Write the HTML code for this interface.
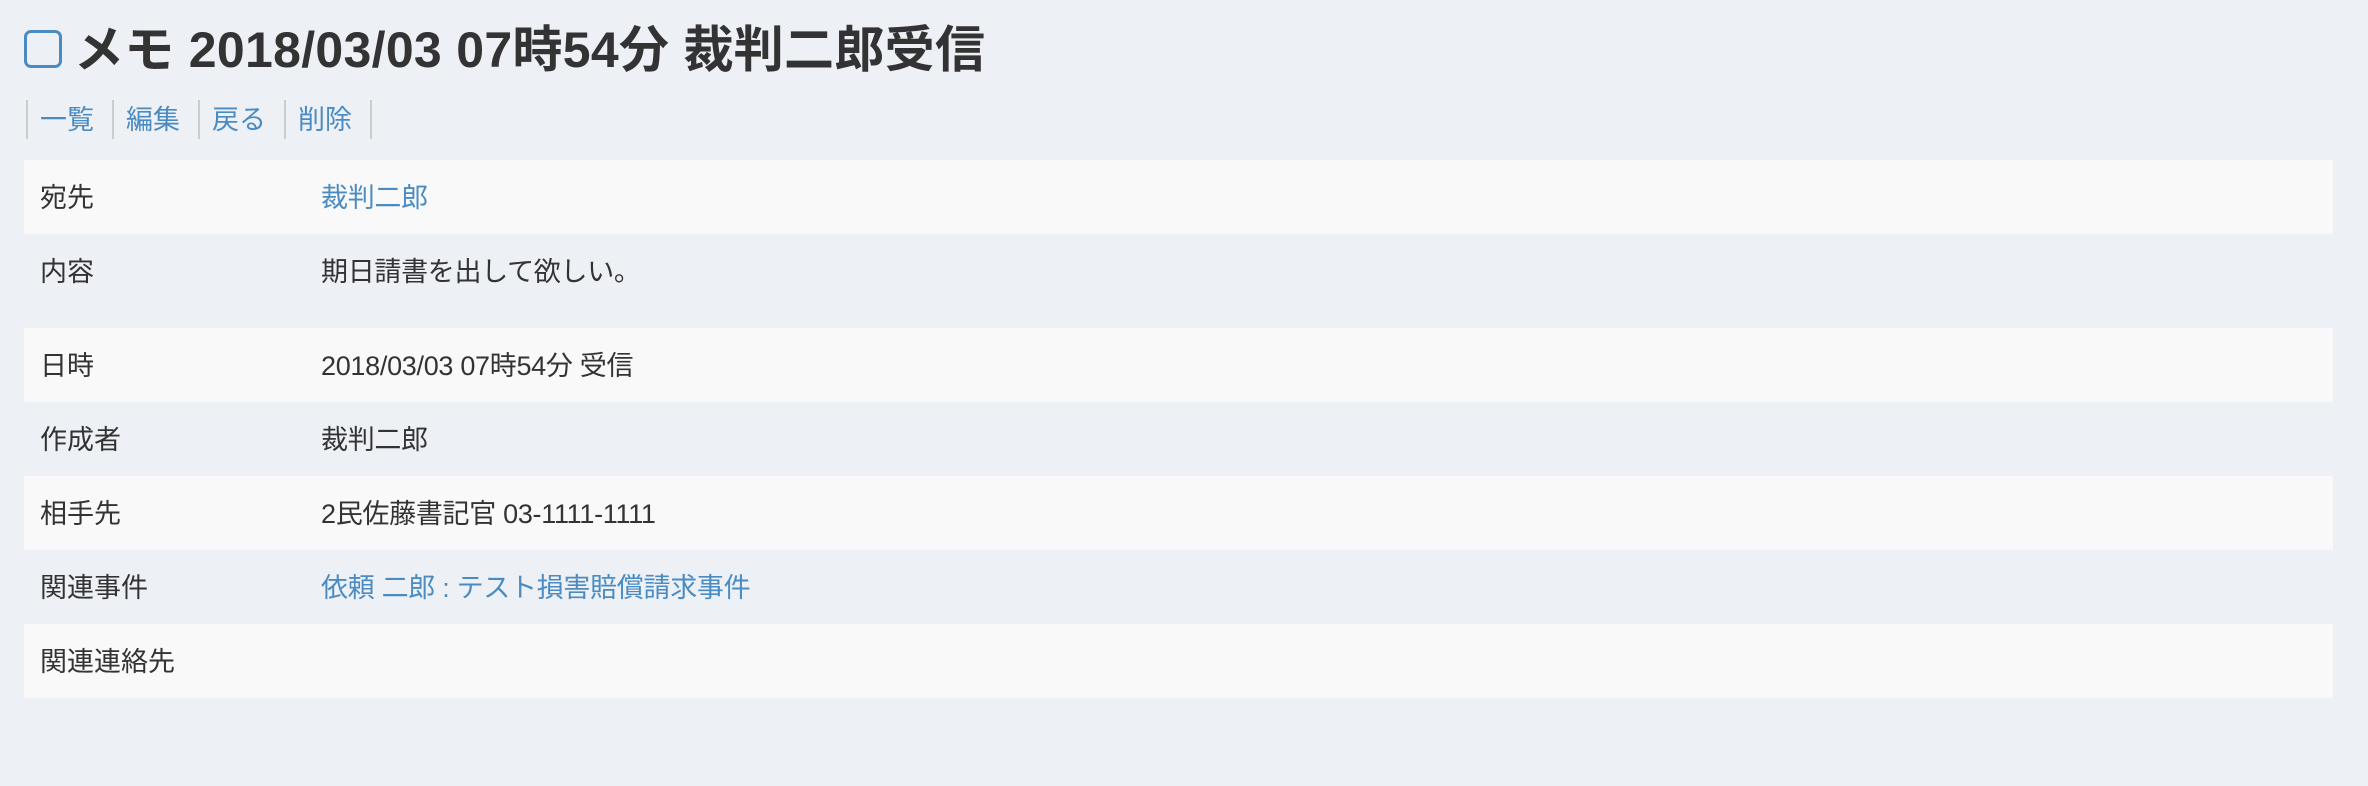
<!DOCTYPE html>
<html><head><meta charset="utf-8"><style>
body{margin:0;background:#edf0f5;width:2368px;height:786px;overflow:hidden;font-family:"Liberation Sans","Noto Sans CJK JP",sans-serif;color:#333}
h1{position:absolute;left:24px;top:18px;margin:0;font-size:50px;font-weight:bold;line-height:64px;white-space:nowrap;letter-spacing:0.3px}
.cb{display:inline-block;width:32px;height:32px;border:3px solid #4a8cc2;border-radius:7px;vertical-align:middle;margin-right:12px;position:relative;top:-5px}
.nav{position:absolute;left:26px;top:100px;height:39px;display:flex;border-left:2px solid #ccc}
.nav a{color:#4a8cc2;text-decoration:none;font-size:27px;line-height:41px;padding:0 18px 0 12px;border-right:2px solid #ccc}
.tbl{position:absolute;left:24px;top:160px;width:2309px}
.row{display:flex;font-size:27px;align-items:flex-start}
.row .l{width:281px;padding-left:16px}
.row .v{flex:1;letter-spacing:-0.3px}
.odd{background:#f9f9f9}
a.lk{color:#4a8cc2;text-decoration:none}
</style></head><body>
<h1><span class="cb"></span>メモ 2018/03/03 07時54分 裁判二郎受信</h1>
<div class="nav"><a>一覧</a><a>編集</a><a>戻る</a><a>削除</a></div>
<div class="tbl">
<div class="row odd" style="height:74px;line-height:76px"><div class="l">宛先</div><div class="v"><a class="lk">裁判二郎</a></div></div>
<div class="row" style="height:94px;line-height:76px"><div class="l">内容</div><div class="v">期日請書を出して欲しい。</div></div>
<div class="row odd" style="height:74px;line-height:76px"><div class="l">日時</div><div class="v">2018/03/03 07時54分 受信</div></div>
<div class="row" style="height:74px;line-height:76px"><div class="l">作成者</div><div class="v">裁判二郎</div></div>
<div class="row odd" style="height:74px;line-height:76px"><div class="l">相手先</div><div class="v">2民佐藤書記官 03-1111-1111</div></div>
<div class="row" style="height:74px;line-height:76px"><div class="l">関連事件</div><div class="v"><a class="lk">依頼 二郎 : テスト損害賠償請求事件</a></div></div>
<div class="row odd" style="height:74px;line-height:76px"><div class="l">関連連絡先</div><div class="v"></div></div>
</div>
</body></html>
